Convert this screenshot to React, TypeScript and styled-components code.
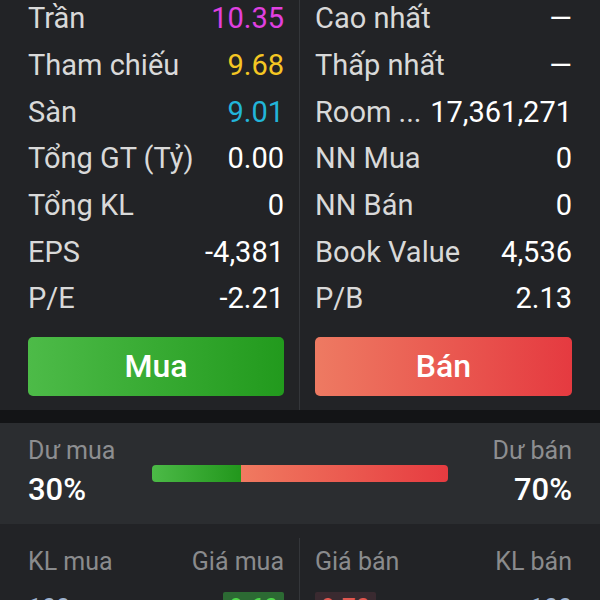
import React from "react";
import styled, { createGlobalStyle } from "styled-components";

const GlobalStyle = createGlobalStyle`
  html, body { margin: 0; padding: 0; background: #222326; }
  body { font-family: Roboto, "Noto Sans", "Liberation Sans", sans-serif; overflow: hidden; }
`;

const Page = styled.div`
  width: 600px;
  height: 600px;
  overflow: hidden;
  background: #222326;
  display: flex;
  flex-direction: column;
  & > * { flex-shrink: 0; }
`;

const InfoGrid = styled.div`
  display: grid;
  grid-template-columns: 300px 300px;
  margin-top: -5px;
  height: 415px;
`;

const Column = styled.div<{ $side: "left" | "right" }>`
  display: flex;
  flex-direction: column;
  padding: ${(p) => (p.$side === "left" ? "0 15px 0 28px" : "0 28px 0 15px")};
  border-right: ${(p) => (p.$side === "left" ? "1px solid #34363a" : "none")};
  box-sizing: border-box;
`;

const Row = styled.div`
  height: 46.67px;
  flex-shrink: 0;
  display: flex;
  align-items: center;
  justify-content: space-between;
  font-size: 29px;
  white-space: nowrap;
`;

const Label = styled.span`
  color: #d9d9d9;
`;

const Value = styled.span<{ $color?: string }>`
  color: ${(p) => p.$color || "#ffffff"};
`;

const ActionButton = styled.div<{ $kind: "buy" | "sell" }>`
  margin-top: 15px;
  height: 59px;
  flex-shrink: 0;
  border-radius: 5px;
  display: flex;
  align-items: center;
  justify-content: center;
  color: #ffffff;
  font-size: 32px;
  font-weight: 500;
  background: ${(p) =>
    p.$kind === "buy"
      ? "linear-gradient(90deg, #4dbb48 0%, #229a1d 100%)"
      : "linear-gradient(90deg, #ee7a62 0%, #e53a40 100%)"};
`;

const Band = styled.div`
  height: 13px;
  background: #131416;
`;

const Summary = styled.div`
  height: 101px;
  background: #2b2d30;
  display: grid;
  grid-template-columns: 1fr 296px 1fr;
  padding: 0 28px;
  box-sizing: border-box;
`;

const SummaryBlock = styled.div<{ $align: "left" | "right" }>`
  display: flex;
  flex-direction: column;
  align-items: ${(p) => (p.$align === "left" ? "flex-start" : "flex-end")};
  padding-top: 12px;
`;

const SummaryLabel = styled.div`
  color: #8d8e90;
  font-size: 25px;
  line-height: 32px;
`;

const SummaryValue = styled.div`
  color: #ffffff;
  font-size: 31px;
  font-weight: 500;
  line-height: 46px;
`;

const Bar = styled.div`
  align-self: center;
  height: 17px;
  border-radius: 4px;
  overflow: hidden;
  display: flex;
`;

const BarPart = styled.div<{ $kind: "buy" | "sell" }>`
  height: 100%;
  background: ${(p) =>
    p.$kind === "buy"
      ? "linear-gradient(90deg, #4cba47 0%, #22971c 100%)"
      : "linear-gradient(90deg, #f07a60 0%, #e63b40 100%)"};
`;

const Book = styled.div`
  flex: 1;
  padding-top: 14px;
  display: grid;
  grid-template-columns: 300px 300px;
`;

const BookColumn = styled.div<{ $side: "left" | "right" }>`
  padding: ${(p) => (p.$side === "left" ? "0 15px 0 28px" : "0 28px 0 15px")};
  border-right: ${(p) => (p.$side === "left" ? "1px solid #34363a" : "none")};
  box-sizing: border-box;
`;

const BookHeader = styled.div`
  height: 47px;
  display: flex;
  align-items: center;
  justify-content: space-between;
  color: #8a8b8d;
  font-size: 25px;
`;

const BookRow = styled.div`
  height: 47px;
  display: flex;
  align-items: center;
  justify-content: space-between;
  font-size: 25px;
`;

const PriceCell = styled.span<{ $bg: string; $color: string }>`
  display: inline-flex;
  align-items: center;
  height: 34px;
  padding: 0 6px;
  border-radius: 2px;
  background: ${(p) => p.$bg};
  color: ${(p) => p.$color};
`;

const Qty = styled.span`
  color: #9fb3cf;
`;

const leftRows = [
  { label: "Trần", value: "10.35", color: "#e040e0" },
  { label: "Tham chiếu", value: "9.68", color: "#f5c623" },
  { label: "Sàn", value: "9.01", color: "#22b5d9" },
  { label: "Tổng GT (Tỷ)", value: "0.00" },
  { label: "Tổng KL", value: "0" },
  { label: "EPS", value: "-4,381" },
  { label: "P/E", value: "-2.21" },
];

const rightRows = [
  { label: "Cao nhất", value: "—" },
  { label: "Thấp nhất", value: "—" },
  { label: "Room ...", value: "17,361,271" },
  { label: "NN Mua", value: "0" },
  { label: "NN Bán", value: "0" },
  { label: "Book Value", value: "4,536" },
  { label: "P/B", value: "2.13" },
];

export default function App() {
  const buy = 30;
  return (
    <>
      <GlobalStyle />
      <Page>
        <InfoGrid>
          <Column $side="left">
            {leftRows.map((r) => (
              <Row key={r.label}>
                <Label>{r.label}</Label>
                <Value $color={r.color}>{r.value}</Value>
              </Row>
            ))}
            <ActionButton $kind="buy">Mua</ActionButton>
          </Column>
          <Column $side="right">
            {rightRows.map((r) => (
              <Row key={r.label}>
                <Label>{r.label}</Label>
                <Value>{r.value}</Value>
              </Row>
            ))}
            <ActionButton $kind="sell">Bán</ActionButton>
          </Column>
        </InfoGrid>
        <Band />
        <Summary>
          <SummaryBlock $align="left">
            <SummaryLabel>Dư mua</SummaryLabel>
            <SummaryValue>30%</SummaryValue>
          </SummaryBlock>
          <Bar>
            <BarPart $kind="buy" style={{ width: `${buy}%` }} />
            <BarPart $kind="sell" style={{ width: `${100 - buy}%` }} />
          </Bar>
          <SummaryBlock $align="right">
            <SummaryLabel>Dư bán</SummaryLabel>
            <SummaryValue>70%</SummaryValue>
          </SummaryBlock>
        </Summary>
        <Book>
          <BookColumn $side="left">
            <BookHeader>
              <span>KL mua</span>
              <span>Giá mua</span>
            </BookHeader>
            <BookRow>
              <Qty>100</Qty>
              <PriceCell $bg="#2c6a33" $color="#4fd84a">9.60</PriceCell>
            </BookRow>
          </BookColumn>
          <BookColumn $side="right">
            <BookHeader>
              <span>Giá bán</span>
              <span>KL bán</span>
            </BookHeader>
            <BookRow>
              <PriceCell $bg="#3a2a30" $color="#e2574f">9.70</PriceCell>
              <Qty>100</Qty>
            </BookRow>
          </BookColumn>
        </Book>
      </Page>
    </>
  );
}
